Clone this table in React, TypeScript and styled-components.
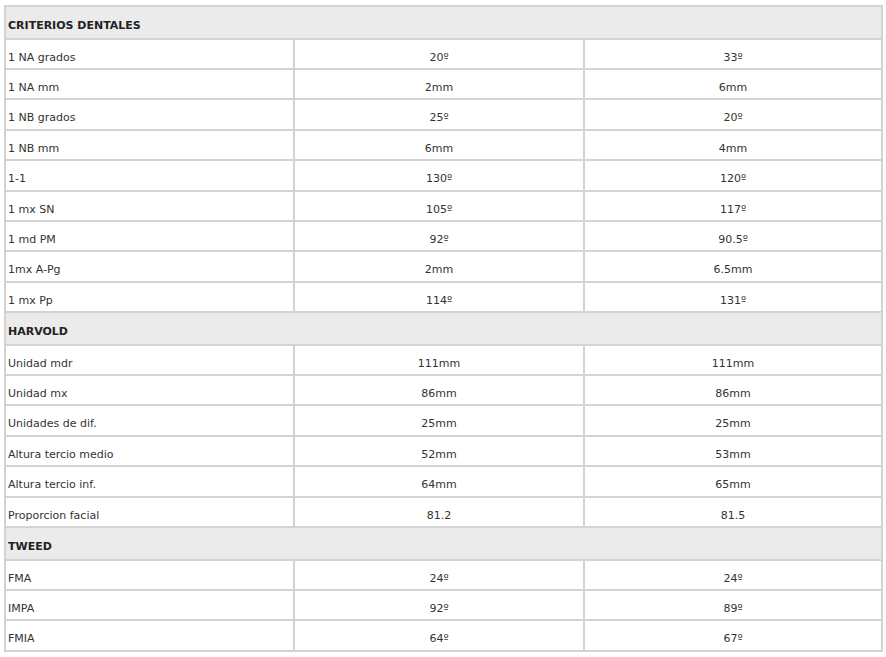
import styled, { createGlobalStyle } from 'styled-components';

type Row = [string, string, string];

const sections: { title: string; rows: Row[] }[] = [
  {
    title: 'CRITERIOS DENTALES',
    rows: [
      ['1 NA grados', '20º', '33º'],
      ['1 NA mm', '2mm', '6mm'],
      ['1 NB grados', '25º', '20º'],
      ['1 NB mm', '6mm', '4mm'],
      ['1-1', '130º', '120º'],
      ['1 mx SN', '105º', '117º'],
      ['1 md PM', '92º', '90.5º'],
      ['1mx A-Pg', '2mm', '6.5mm'],
      ['1 mx Pp', '114º', '131º'],
    ],
  },
  {
    title: 'HARVOLD',
    rows: [
      ['Unidad mdr', '111mm', '111mm'],
      ['Unidad mx', '86mm', '86mm'],
      ['Unidades de dif.', '25mm', '25mm'],
      ['Altura tercio medio', '52mm', '53mm'],
      ['Altura tercio inf.', '64mm', '65mm'],
      ['Proporcion facial', '81.2', '81.5'],
    ],
  },
  {
    title: 'TWEED',
    rows: [
      ['FMA', '24º', '24º'],
      ['IMPA', '92º', '89º'],
      ['FMIA', '64º', '67º'],
    ],
  },
];

const GlobalStyle = createGlobalStyle`
  body {
    margin: 0;
    padding: 5px 3px 0 4px;
    background: #fff;
    font-family: Verdana, "DejaVu Sans", sans-serif;
  }
`;

const S = {
  Table: styled.table`
    width: 879px;
    border-collapse: collapse;
    table-layout: fixed;
    font-size: 11px;
    color: #333;

    td {
      border: 2px solid #d3d3d3;
      padding: 11px 2px 0 2px;
      height: 17.4px;
      line-height: 14px;
      vertical-align: top;
    }
  `,

  Title: styled.td`
    && {
      height: 18.6px;
      padding-top: 12px;
    }
    background: #ebebeb;
    font-weight: bold;
    color: #222;
  `,

  Label: styled.td``,

  Value: styled.td`
    text-align: center;
  `,
};

export default function App() {
  return (
    <>
      <GlobalStyle />
      <S.Table>
        <colgroup>
          <col style={{ width: 289 }} />
          <col style={{ width: 290 }} />
          <col />
        </colgroup>
        <tbody>
          {sections.map((section) => (
            <Section key={section.title} {...section} />
          ))}
        </tbody>
      </S.Table>
    </>
  );
}

const Section = ({ title, rows }: { title: string; rows: Row[] }) => (
  <>
    <tr>
      <S.Title colSpan={3}>{title}</S.Title>
    </tr>
    {rows.map(([label, a, b]) => (
      <tr key={label}>
        <S.Label>{label}</S.Label>
        <S.Value>{a}</S.Value>
        <S.Value>{b}</S.Value>
      </tr>
    ))}
  </>
);
